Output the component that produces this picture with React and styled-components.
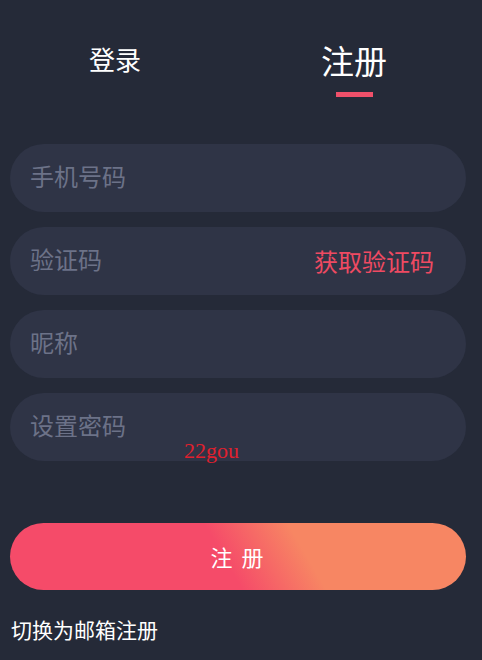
import React from "react";
import styled, { createGlobalStyle } from "styled-components";

const Global = createGlobalStyle`
  html, body { margin: 0; padding: 0; background: #252a38; }
  body { font-family: "Noto Sans CJK SC", "Noto Sans", sans-serif; }
`;

const Page = styled.div`
  position: relative;
  width: 482px;
  height: 660px;
  background: #252a38;
  box-sizing: border-box;
  padding: 0 16px 0 10px;
  display: flex;
  flex-direction: column;
`;

const Tabs = styled.div`
  display: flex;
  align-items: flex-start;
  height: 144px;
  padding-left: 79px;
  gap: 180px;
`;

const Tab = styled.div`
  display: flex;
  flex-direction: column;
  align-items: center;
  color: #ffffff;
  font-size: ${(p) => (p.$active ? "33px" : "26px")};
  line-height: 1;
  padding-top: ${(p) => (p.$active ? "44px" : "46px")};
`;

const Underline = styled.div`
  width: 37px;
  height: 5px;
  background: #f0506a;
  margin-top: 15px;
`;

const Fields = styled.div`
  display: flex;
  flex-direction: column;
  gap: 15px;
`;

const Field = styled.div`
  height: 68px;
  box-sizing: border-box;
  border-radius: 34px;
  background: #2f3446;
  display: flex;
  align-items: center;
  justify-content: space-between;
  padding: 0 32px 6px 20px;
  font-size: 24px;
`;

const Placeholder = styled.span`
  color: #6c7288;
`;

const CodeLink = styled.span`
  color: #ef4a62;
  margin-top: 4px;
`;

const Submit = styled.button`
  margin-top: 62px;
  height: 67px;
  border: none;
  border-radius: 34px;
  background: linear-gradient(60deg, #f54b69 0%, #f54b69 47%, #f78663 64%, #f78663 100%);
  color: #ffffff;
  font-family: "Noto Sans CJK SC", "Noto Sans", sans-serif;
  font-size: 22px;
  letter-spacing: 2px;
  padding: 0 0 2px 0;
`;

const Switch = styled.div`
  margin-top: 29px;
  padding-left: 1px;
  color: #ffffff;
  font-size: 21px;
  line-height: 1;
`;

const Watermark = styled.div`
  position: absolute;
  left: 184px;
  top: 440px;
  font-family: "Liberation Serif", serif;
  font-size: 22px;
  color: #e0202e;
  line-height: 1;
`;

export default function App() {
  return (
    <>
      <Global />
      <Page>
        <Tabs>
          <Tab>登录</Tab>
          <Tab $active>
            注册
            <Underline />
          </Tab>
        </Tabs>
        <Fields>
          <Field><Placeholder>手机号码</Placeholder></Field>
          <Field>
            <Placeholder>验证码</Placeholder>
            <CodeLink>获取验证码</CodeLink>
          </Field>
          <Field><Placeholder>昵称</Placeholder></Field>
          <Field><Placeholder>设置密码</Placeholder></Field>
        </Fields>
        <Submit>注 册</Submit>
        <Switch>切换为邮箱注册</Switch>
        <Watermark>22gou</Watermark>
      </Page>
    </>
  );
}
